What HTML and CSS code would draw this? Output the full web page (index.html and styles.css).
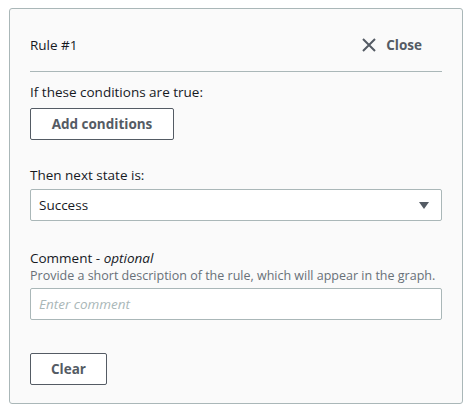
FILE: index.html
```html
<!DOCTYPE html>
<html>
<head>
<meta charset="utf-8">
<link rel="stylesheet" href="styles.css">
</head>
<body>
<div class="card">
  <div class="header">
    <span class="title">Rule #1</span>
    <span class="close">
      <svg class="x" width="14" height="14" viewBox="0 0 14 14"><path d="M1 1 L13 13 M13 1 L1 13" stroke="#545b64" stroke-width="2" fill="none"/></svg>
      Close
    </span>
  </div>
  <div class="divider"></div>
  <div class="field f1">
    <div class="label">If these conditions are true:</div>
    <button class="btn add">Add conditions</button>
  </div>
  <div class="field f2">
    <div class="label">Then next state is:</div>
    <div class="select">
      <span>Success</span>
      <svg width="10" height="7" viewBox="0 0 10 7"><path d="M0 0 H10 L5 7 Z" fill="#545b64"/></svg>
    </div>
  </div>
  <div class="field f3">
    <div class="label">Comment - <i>optional</i></div>
    <div class="desc">Provide a short description of the rule, which will appear in the graph.</div>
    <div class="input">Enter comment</div>
  </div>
  <button class="btn clear">Clear</button>
</div>
</body>
</html>
```
FILE: styles.css
```css
html, body { margin: 0; padding: 0; background: #fff; }
body { padding: 8px 7px 0 9px; font-family: "Open Sans", "Noto Sans", sans-serif; color: #16191f; font-size: 13.5px; }
.card {
  width: 454px; height: 396px; box-sizing: border-box;
  border: 1px solid #aab7b8; border-radius: 3px; background: #fafafa;
  padding: 0 20px;
}
.header { display: flex; justify-content: space-between; align-items: center; height: 52px; padding-top: 10px; }
.title { font-size: 13.5px; }
.close { display: flex; align-items: center; gap: 10px; font-weight: 700; color: #545b64; font-size: 13.5px; margin-right: 20px; }
.divider { height: 1px; background: #aab7b8; }
.label { font-size: 13.5px; line-height: 20px; }
.f1 { margin-top: 10px; }
.btn {
  display: block; font-family: inherit; font-weight: 700; font-size: 13.5px; color: #545b64;
  background: #fff; border: 1px solid #545b64; border-radius: 2px; padding: 0; height: 32px;
}
.add { width: 144px; margin-top: 6px; }
.f2 { margin-top: 25px; }
.select {
  margin-top: 4px; height: 32px; box-sizing: border-box; background: #fff; border: 1px solid #aab7b8; border-radius: 2px;
  display: flex; align-items: center; justify-content: space-between; padding: 0 12px 0 8px;
}
.f3 { margin-top: 27px; }
.desc { font-size: 12.5px; color: #687078; line-height: 16px; }
.input {
  margin-top: 4px; height: 32px; box-sizing: border-box; background: #fff; border: 1px solid #aab7b8; border-radius: 2px;
  display: flex; align-items: center; padding: 0 8px; color: #aab7b8; font-style: italic;
}
.clear { width: 77px; margin-top: 33px; }
```
